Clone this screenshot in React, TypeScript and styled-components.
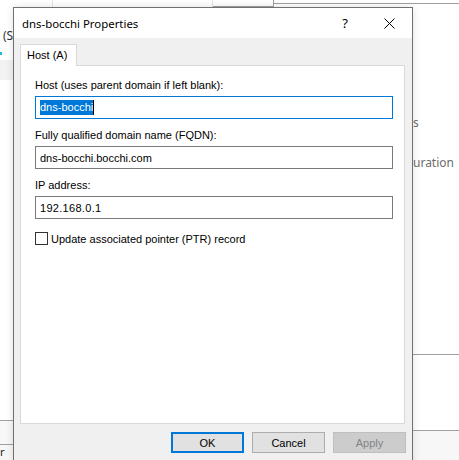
import React from "react";
import styled, { createGlobalStyle } from "styled-components";

const Global = createGlobalStyle`
  html, body { margin: 0; padding: 0; background: #ffffff; }
  body { font-family: "Liberation Sans", Arial, sans-serif; font-size: 11px; color: #000; }
`;

const Page = styled.div`
  position: relative;
  width: 459px;
  height: 460px;
  overflow: hidden;
  background: #ffffff;
`;

/* ---------- background window ---------- */
const Backdrop = styled.div`
  display: flex;
  flex-direction: column;
  height: 100%;
`;

const HeaderRow = styled.div`
  display: flex;
  height: 7px;
  flex: none;
`;

const HeaderCell = styled.div<{ $w: number; $boxed?: boolean }>`
  width: ${(p) => p.$w}px;
  flex: none;
  border-right: 1px solid ${(p) => (p.$boxed ? "#a0a0a0" : "#e3e3e3")};
  border-bottom: ${(p) => (p.$boxed ? "1px solid #a0a0a0" : "none")};
  box-sizing: border-box;
`;

const HeaderRest = styled.div`
  flex: 1;
  height: 3px;
  border-bottom: 1px solid #a0a0a0;
`;

const BodyGrid = styled.div`
  flex: 1;
  display: grid;
  grid-template-columns: 413px 1fr;
`;

const LeftPane = styled.div`
  display: flex;
  flex-direction: column;
`;

const BgText = styled.div<{ $top: number }>`
  margin-top: ${(p) => p.$top}px;
  padding-left: 3px;
  height: 16px;
  line-height: 16px;
  font-family: "Noto Sans", sans-serif;
  font-size: 12px;
  color: #333;
  white-space: nowrap;
`;

const CyanMark = styled.div`
  margin-top: 8px;
  width: 2px;
  height: 3px;
  background: #1fb8d8;
`;

const SelectedRow = styled.div`
  margin-top: 5px;
  height: 20px;
  background: #f2f2f2;
`;

const Spacer = styled.div`
  flex: 1;
`;

const BottomBand = styled.div`
  height: 25px;
  border-top: 1px solid #a0a0a0;
  border-bottom: 1px solid #a0a0a0;
  background: #f7f7f7;
  box-sizing: border-box;
`;

const BottomRest = styled.div`
  height: 15px;
  background: #f7f7f7;
  font-family: "Noto Sans", sans-serif;
  font-size: 11px;
  line-height: 14px;
  color: #222;
`;

const RightPane = styled.div`
  display: flex;
  flex-direction: column;
`;

const RightText = styled.div<{ $top: number }>`
  margin-top: ${(p) => p.$top}px;
  height: 16px;
  line-height: 16px;
  font-family: "Noto Sans", sans-serif;
  font-size: 12px;
  color: #6d6d6d;
  white-space: nowrap;
`;

const RightLine = styled.div<{ $top: number }>`
  margin-top: ${(p) => p.$top}px;
  border-top: 1px solid #a0a0a0;
`;

const RightGray = styled.div`
  flex: 1;
  background: #f7f7f7;
`;

/* ---------- dialog ---------- */
const Dialog = styled.div`
  position: absolute;
  left: 13px;
  top: 7px;
  width: 400px;
  height: 470px;
  box-sizing: border-box;
  border: 1px solid #707070;
  background: #f0f0f0;
  display: flex;
  flex-direction: column;
  box-shadow: 0 0 8px rgba(0, 0, 0, 0.12);
`;

const TitleBar = styled.div`
  height: 30px;
  flex: none;
  background: #ffffff;
  display: flex;
  align-items: center;
  padding-left: 8px;
  padding-right: 1px;
`;

const TitleText = styled.div`
  flex: 1;
  font-family: "Noto Sans", "Segoe UI", sans-serif;
  font-size: 11.4px;
  color: #000;
  padding-top: 1px;
`;

const TitleButton = styled.div`
  width: 44px;
  height: 30px;
  display: flex;
  align-items: center;
  justify-content: center;
  font-family: "Noto Sans", sans-serif;
  font-size: 13px;
  color: #000;
`;

const Content = styled.div`
  flex: 1;
  display: flex;
  flex-direction: column;
  padding: 6px 7px 0 6px;
`;

const TabStrip = styled.div`
  display: flex;
  height: 21px;
  flex: none;
  position: relative;
  z-index: 1;
`;

const Tab = styled.div`
  width: 57px;
  height: 22px;
  box-sizing: border-box;
  border: 1px solid #d9d9d9;
  border-bottom: none;
  background: #ffffff;
  padding-left: 6px;
  line-height: 20px;
  font-size: 11px;
`;

const TabPanel = styled.div`
  height: 359px;
  flex: none;
  box-sizing: border-box;
  border: 1px solid #d9d9d9;
  background: #ffffff;
  padding: 11px 11px 0 14px;
  display: flex;
  flex-direction: column;
`;

const Field = styled.div`
  display: flex;
  flex-direction: column;
  margin-bottom: 8px;
`;

const Label = styled.div`
  height: 16px;
  line-height: 16px;
  margin-bottom: 3px;
  font-size: 11px;
  white-space: nowrap;
`;

const InputBox = styled.div<{ $focused?: boolean }>`
  height: 23px;
  box-sizing: border-box;
  border: 1px solid ${(p) => (p.$focused ? "#0078d7" : "#7a7a7a")};
  background: #ffffff;
  display: flex;
  align-items: center;
  padding-left: 4px;
  font-size: 11px;
  white-space: nowrap;
`;

const Selection = styled.span`
  background: #0078d7;
  color: #ffffff;
  line-height: 15px;
`;

const Caret = styled.span`
  display: inline-block;
  width: 1px;
  height: 15px;
  background: #000;
`;

const IpText = styled.span`
  letter-spacing: 0.3px;
`;

const CheckRow = styled.label`
  margin-top: 5px;
  display: flex;
  align-items: center;
  height: 13px;
  font-size: 11px;
  white-space: nowrap;
`;

const CheckBox = styled.span`
  width: 13px;
  height: 13px;
  box-sizing: border-box;
  border: 1px solid #333;
  background: #fff;
  margin-right: 3px;
  flex: none;
`;

const ButtonRow = styled.div`
  display: flex;
  justify-content: flex-end;
  gap: 8px;
  margin-top: 8px;
  margin-right: -1px;
`;

const Button = styled.div<{ $variant?: "default" | "disabled" }>`
  width: 73px;
  height: 21px;
  box-sizing: border-box;
  display: flex;
  align-items: center;
  justify-content: center;
  font-size: 11px;
  background: ${(p) => (p.$variant === "disabled" ? "#cccccc" : "#e1e1e1")};
  color: ${(p) => (p.$variant === "disabled" ? "#838383" : "#000")};
  border: ${(p) =>
    p.$variant === "default"
      ? "2px solid #0078d7"
      : p.$variant === "disabled"
      ? "1px solid #bfbfbf"
      : "1px solid #adadad"};
`;

export default function App() {
  return (
    <Page>
      <Global />
      <Backdrop>
        <HeaderRow>
          <HeaderCell $w={53} />
          <HeaderCell $w={160} />
          <HeaderCell $w={61} $boxed />
          <HeaderRest />
        </HeaderRow>
        <BodyGrid>
          <LeftPane>
            <BgText $top={21}>(SOA)</BgText>
            <CyanMark />
            <SelectedRow />
            <Spacer />
            <BottomBand />
            <BottomRest>r</BottomRest>
          </LeftPane>
          <RightPane>
            <RightText $top={108}>s</RightText>
            <RightText $top={24}>uration</RightText>
            <RightLine $top={183} />
            <RightLine $top={75} />
            <RightGray />
          </RightPane>
        </BodyGrid>
      </Backdrop>

      <Dialog>
        <TitleBar>
          <TitleText>dns-bocchi Properties</TitleText>
          <TitleButton>?</TitleButton>
          <TitleButton>
            <svg width="11" height="11" viewBox="0 0 11 11">
              <path d="M0.5 0.5 L10.5 10.5 M10.5 0.5 L0.5 10.5" stroke="#000" strokeWidth="1" fill="none" />
            </svg>
          </TitleButton>
        </TitleBar>
        <Content>
          <TabStrip>
            <Tab>Host (A)</Tab>
          </TabStrip>
          <TabPanel>
            <Field>
              <Label>Host (uses parent domain if left blank):</Label>
              <InputBox $focused>
                <Selection>dns-bocchi</Selection>
                <Caret />
              </InputBox>
            </Field>
            <Field>
              <Label>Fully qualified domain name (FQDN):</Label>
              <InputBox>dns-bocchi.bocchi.com</InputBox>
            </Field>
            <Field>
              <Label>IP address:</Label>
              <InputBox>
                <IpText>192.168.0.1</IpText>
              </InputBox>
            </Field>
            <CheckRow>
              <CheckBox />
              Update associated pointer (PTR) record
            </CheckRow>
          </TabPanel>
          <ButtonRow>
            <Button $variant="default">OK</Button>
            <Button>Cancel</Button>
            <Button $variant="disabled">Apply</Button>
          </ButtonRow>
        </Content>
      </Dialog>
    </Page>
  );
}
